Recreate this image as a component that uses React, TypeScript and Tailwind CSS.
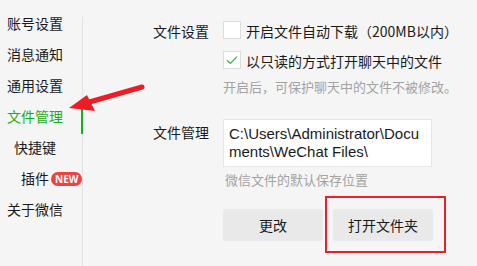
const font = { fontFamily: '"Noto Sans CJK SC", "Microsoft YaHei", sans-serif' };

const menu = [
  { label: "账号设置", indent: "pl-[7px]" },
  { label: "消息通知", indent: "pl-[7px]" },
  { label: "通用设置", indent: "pl-[7px]" },
  { label: "文件管理", indent: "pl-[7px]", active: true },
  { label: "快捷键", indent: "pl-[14px]" },
  { label: "插件", indent: "pl-[21px]", badge: true },
  { label: "关于微信", indent: "pl-[7px]" },
];

function Checkbox({ checked }: { checked?: boolean }) {
  return (
    <span className="flex h-[18px] w-[18px] shrink-0 items-center justify-center border border-[#dcdcdc] bg-white">
      {checked && (
        <svg width="12" height="10" viewBox="0 0 12 10">
          <path d="M1 5.2 L4.4 8.4 L11 1.6" fill="none" stroke="#3cb043" strokeWidth="1.3" />
        </svg>
      )}
    </span>
  );
}

export default function App() {
  return (
    <div className="relative flex h-[266px] w-[477px] overflow-hidden bg-[#f5f5f5] text-[#1a1a1a]" style={font}>
      {/* 좌측 메뉴 */}
      <aside className="relative w-[83px] shrink-0 pt-[8px]">
        <span className="absolute right-0 top-[17px] bottom-0 w-px bg-[#e2e2e2]" />
        {menu.map((m) => (
          <div key={m.label} className={`relative flex h-[31px] items-center text-[14px] ${m.indent} ${m.active ? "text-[#1aad19]" : ""}`}>
            {m.label}
            {m.badge && (
              <span className="ml-[2px] flex h-[14px] items-center rounded-full bg-[#f04141] px-[4px] text-[10px] font-bold leading-none text-white" style={{ fontFamily: '"Open Sans", sans-serif' }}>
                NEW
              </span>
            )}
            {m.active && <span className="absolute right-0 top-[7px] h-[26px] w-[2px] bg-[#1aad19]" />}
          </div>
        ))}
      </aside>

      {/* 설정 본문 */}
      <main className="flex flex-col pl-[70px] pt-[21px] text-[14px]">
        <div className="flex">
          <div className="w-[70px] pt-[1px] leading-[18px]">文件设置</div>
          <div className="flex flex-col">
            <label className="flex h-[18px] items-center gap-[5px]">
              <Checkbox />
              <span className="pt-[2px]">开启文件自动下载（200MB以内）</span>
            </label>
            <label className="mt-[12px] flex h-[18px] items-center gap-[5px]">
              <Checkbox checked />
              <span className="pt-[2px]">以只读的方式打开聊天中的文件</span>
            </label>
            <p className="mt-[9px] text-[13px] leading-[18px] text-[#a3a3a3]">开启后，可保护聊天中的文件不被修改。</p>
          </div>
        </div>

        <div className="mt-[23px] flex">
          <div className="w-[70px] pt-[3px] leading-[20px]">文件管理</div>
          <div className="flex flex-col">
            <div className="h-[48px] w-[209px] border border-[#e6e6e6] bg-white pl-[5px] pt-[5px] text-[15px] leading-[18px]" style={{ fontFamily: '"Liberation Sans", "Noto Sans CJK SC", sans-serif' }}>
              C:\Users\Administrator\Docu
              <br />
              ments\WeChat Files\
            </div>
            <p className="mt-[4px] pl-[2px] text-[13px] leading-[18px] text-[#a3a3a3]">微信文件的默认保存位置</p>
            <div className="mt-[20px] flex gap-[10px]">
              <button className="h-[32px] w-[100px] rounded-[3px] bg-[#e9e9e9] text-[14px]">更改</button>
              <div className="relative">
                <button className="h-[32px] w-[100px] rounded-[3px] bg-[#e9e9e9] text-[14px]">打开文件夹</button>
                <span className="pointer-events-none absolute left-[-8px] top-[-13px] h-[57px] w-[121px] border-2 border-[#e8202a]" />
              </div>
            </div>
          </div>
        </div>
      </main>

      {/* 빨간 화살표 주석 */}
      <svg className="pointer-events-none absolute left-0 top-0" width="477" height="266">
        <line x1="142" y1="87" x2="86" y2="103" stroke="#ee1c25" strokeWidth="5" strokeLinecap="round" />
        <path d="M69 108 L87 95 L95 111 Z" fill="#ee1c25" />
      </svg>
    </div>
  );
}
